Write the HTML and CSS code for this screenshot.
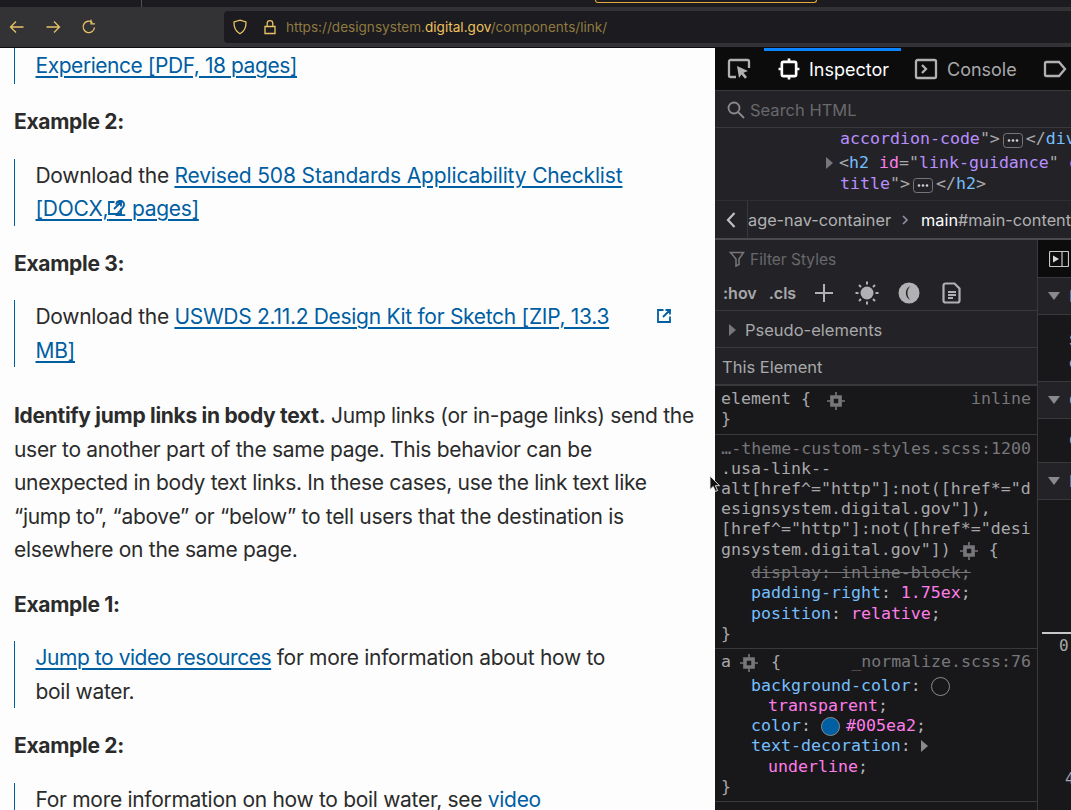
FILE: index.html
```html
<!DOCTYPE html>
<html lang="en">
<head>
    <meta charset="UTF-8">
    <title>Link | U.S. Web Design System</title>
    <link rel="stylesheet" href="styles.css">
</head>
<body>
    <div class="tabstrip">
        <div class="tabstrip-line"></div>
        <div class="active-tab"></div>
    </div>
    <div class="toolbar">
        <div class="nav-buttons">
            <svg class="nav-icon" viewBox="0 0 16 16"><path d="M14.500 8H1.500M7 2.500 1.500 8 7 13.500"/></svg>
            <svg class="nav-icon" viewBox="0 0 16 16"><path d="M1.500 8h13M9 2.500 14.500 8 9 13.500"/></svg>
            <svg class="nav-icon" viewBox="0 0 16 16"><path d="M13.500 8.500A5.700 5.700 0 1 1 11.500 3.500M10 .8v4h4"/></svg>
        </div>
        <div class="urlbar">
            <svg class="url-icon" viewBox="0 0 16 16"><path d="M8 1.200 14 3c.2 5.500-1.800 9.500-6 11.800C3.800 12.500 1.800 8.500 2 3z"/></svg>
            <svg class="url-icon lock" viewBox="0 0 16 16"><path d="M3 7.500h10v7H3zM5.200 7.500V4.500a2.800 2.800 0 0 1 5.600 0v3"/></svg>
            <span class="url-text">https://designsystem.<span class="url-domain">digital.gov</span>/components/link/</span>
        </div>
    </div>

    <div class="window">
        <div class="article">
            <div class="quote quote-first">
                <a class="tight" href="#">Experience [PDF, 18 pages]</a>
            </div>
            <p class="example">Example 2:</p>
            <div class="quote">
                Download the <a class="loose" href="#">Revised 508 Standards Applicability Checklist</a><br><a href="#">[DOCX,<span class="ext-anchor"><svg class="ext-icon ext-overlap" viewBox="0 0 16 16"><path d="M7.500 2H2v12h12V8.500M9.500 2H14v4.500M14 2 7 9"/></svg></span> 2 pages]</a>
            </div>
            <p class="example">Example 3:</p>
            <div class="quote">
                Download the <a href="#">USWDS 2.11.2 Design Kit for Sketch [ZIP, 13.3</a><span class="ext-anchor"><svg class="ext-icon ext-far" viewBox="0 0 16 16"><path d="M7.500 2H2v12h12V8.500M9.500 2H14v4.500M14 2 7 9"/></svg></span><br><a href="#">MB]</a>
            </div>
            <p class="body-text"><b>Identify jump links in body text.</b> Jump links (or in-page links) send the<br>
                user to another part of the same page. This behavior can be<br>
                unexpected in body text links. In these cases, use the link text like<br>
                “jump to”, “above” or “below” to tell users that the destination is<br>
                elsewhere on the same page.</p>
            <p class="example">Example 1:</p>
            <div class="quote">
                <a class="tight" href="#">Jump to video resources</a> for more information about how to<br>boil water.
            </div>
            <p class="example">Example 2:</p>
            <div class="quote">
                For more information on how to boil water, see <a class="plain" href="#">video</a>
            </div>
        </div>

        <div class="devtools">
            <div class="dt-tabs">
                <svg class="dt-icon picker" viewBox="0 0 24 24"><path d="M9 20H3.500A1.500 1.500 0 0 1 2 18.500V4.500A1.500 1.500 0 0 1 3.500 3h17A1.500 1.500 0 0 1 22 4.500V11"/><path class="solid" d="M10 9l11 5-4.500 1.800 3.500 4.200-2 1.700-3.500-4.300L12 21z"/></svg>
                <div class="dt-divider"></div>
                <div class="dt-tab dt-tab-active">
                    <svg class="dt-icon" viewBox="0 0 20 20"><path d="M5 3.500h10a1.500 1.500 0 0 1 1.500 1.500v10a1.500 1.500 0 0 1-1.500 1.500H5A1.500 1.500 0 0 1 3.500 15V5A1.500 1.500 0 0 1 5 3.500zM10 .5v3M10 16.500v3M.5 10h3M16.500 10h3"/></svg>
                    Inspector
                </div>
                <div class="dt-tab">
                    <svg class="dt-icon" viewBox="0 0 24 24"><path d="M3.500 3h17A1.500 1.500 0 0 1 22 4.500v15a1.500 1.500 0 0 1-1.500 1.500h-17A1.500 1.500 0 0 1 2 19.500v-15A1.500 1.500 0 0 1 3.500 3zM8 8l4 4-4 4"/></svg>
                    Console
                </div>
                <div class="dt-tab">
                    <svg class="dt-icon" viewBox="0 0 24 24"><path d="M3.500 5h12.500l6 7-6 7H3.500A1.500 1.500 0 0 1 2 17.500v-11A1.500 1.500 0 0 1 3.500 5z"/></svg>
                </div>
            </div>

            <div class="dt-search">
                <svg class="search-icon" viewBox="0 0 18 18"><circle cx="7" cy="7" r="5.500"/><path d="m11 11 6 6"/></svg>
                Search HTML
            </div>

            <div class="markup">
                <div class="ml1"><span class="attr">accordion-code</span>"&gt;<svg class="dots" viewBox="0 0 20 15"><rect x=".5" y=".5" width="19" height="14" rx="3"/><circle cx="6" cy="7.500" r="1.300"/><circle cx="10" cy="7.500" r="1.300"/><circle cx="14" cy="7.500" r="1.300"/></svg>&lt;/<span class="tag">div</span>&gt;</div>
                <div class="ml0"><span class="twisty"></span>&lt;<span class="tag">h2</span> <span class="name">id</span>="<span class="attr">link-guidance</span>" <span class="name">class</span></div>
                <div class="ml1"><span class="attr">title</span>"&gt;<svg class="dots" viewBox="0 0 20 15"><rect x=".5" y=".5" width="19" height="14" rx="3"/><circle cx="6" cy="7.500" r="1.300"/><circle cx="10" cy="7.500" r="1.300"/><circle cx="14" cy="7.500" r="1.300"/></svg>&lt;/<span class="tag">h2</span>&gt;</div>
            </div>

            <div class="crumbs">
                <div class="crumb-back"><svg viewBox="0 0 12 18"><path d="M9.500 2 3 9l6.500 7"/></svg></div>
                <span class="crumb">age-nav-container</span>
                <svg class="crumb-sep" viewBox="0 0 8 12"><path d="m2 2 4 4-4 4"/></svg>
                <span class="crumb"><span class="crumb-main">main</span>#main-content</span>
            </div>

            <div class="dt-bottom">
                <div class="rules">
                    <div class="filter">
                        <svg class="filter-icon" viewBox="0 0 16 16"><path d="M1.500 1.500h13L10 8v5.500L7 15V8z"/></svg>
                        Filter Styles
                    </div>
                    <div class="rule-tools">
                        <span>:hov</span>
                        <span class="cls">.cls</span>
                        <svg class="tool plus" viewBox="0 0 20 20"><path d="M10 1v18M1 10h18"/></svg>
                        <svg class="tool sun" viewBox="0 0 24 24"><circle class="solid" cx="12" cy="12" r="6.500"/><path d="M12 .5v3M12 20.500v3M.5 12h3M20.500 12h3M4 4l2 2M18 18l2 2M4 20l2-2M18 6l2-2"/></svg>
                        <svg class="tool moon" viewBox="0 0 22 22"><circle class="solid" cx="11" cy="11" r="10.500"/><path class="bite" d="M12.500 4A7.600 7.600 0 0 0 12.500 18 9.500 9.500 0 0 1 12.500 4z"/></svg>
                        <svg class="tool page" viewBox="0 0 20 22"><path d="M3.500 1.500h9l5 5v12a2 2 0 0 1-2 2h-12a2 2 0 0 1-2-2v-15a2 2 0 0 1 2-2zM6 10h8M6 13h8M6 16h5"/></svg>
                    </div>
                    <div class="pseudo"><span class="twisty"></span>Pseudo-elements</div>
                    <div class="this-element">This Element</div>

                    <div class="rule">
                        <div class="code-line"><span class="src">inline</span><span class="sel">element {</span><svg class="gear" viewBox="0 0 20 20"><path class="gear-box" d="M5.500 5.500h9v9h-9z"/><path d="M10 0v4M10 16v4M0 10h4M16 10h4"/></svg></div>
                        <div class="code-line sel">}</div>
                    </div>
                    <div class="rule">
                        <div class="code-line src-line">…-theme-custom-styles.scss:1200</div>
                        <div class="code-line sel">.usa-link--<br>alt[href^="http"]:not([href*="d<br>esignsystem.digital.gov"]),<br>[href^="http"]:not([href*="desi<br>gnsystem.digital.gov"])<svg class="gear gear-b" viewBox="0 0 20 20"><path class="gear-box" d="M5.500 5.500h9v9h-9z"/><path d="M10 0v4M10 16v4M0 10h4M16 10h4"/></svg>{</div>
                        <div class="code-line prop-line first-prop off"><s>display: inline-block;</s></div>
                        <div class="code-line prop-line"><span class="prop">padding-right</span>: <span class="val">1.75ex</span>;</div>
                        <div class="code-line prop-line"><span class="prop">position</span>: <span class="val">relative</span>;</div>
                        <div class="code-line sel">}</div>
                    </div>
                    <div class="rule">
                        <div class="code-line"><span class="src">_normalize.scss:76</span><span class="sel">a</span><svg class="gear gear-a" viewBox="0 0 20 20"><path class="gear-box" d="M5.500 5.500h9v9h-9z"/><path d="M10 0v4M10 16v4M0 10h4M16 10h4"/></svg><span class="sel">{</span></div>
                        <div class="code-line prop-line first-prop"><span class="prop">background-color</span>: <span class="swatch"></span></div>
                        <div class="code-line val-line"><span class="val">transparent</span>;</div>
                        <div class="code-line prop-line"><span class="prop">color</span>: <span class="swatch swatch-blue"></span><span class="val">#005ea2</span>;</div>
                        <div class="code-line prop-line"><span class="prop">text-decoration</span>: <span class="twisty twisty-val"></span></div>
                        <div class="code-line val-line"><span class="val">underline</span>;</div>
                        <div class="code-line sel">}</div>
                    </div>
                    <div class="rule rule-empty"></div>
                </div>

                <div class="side">
                    <div class="side-top"><svg viewBox="0 0 20 16"><rect x=".5" y=".5" width="19" height="15" rx="1"/><path d="M13 .5v15"/><path class="solid-white" d="M4 4.500v7l6-3.500z"/></svg></div>
                    <div class="side-head"><span class="down"></span>Flexbox</div>
                    <div class="side-body side-body-a">Select a Flex<br>container</div>
                    <div class="side-head"><span class="down"></span>Grid</div>
                    <div class="side-body side-body-b">CSS Grid</div>
                    <div class="side-head"><span class="down"></span>Box Model</div>
                    <div class="side-box">
                        <div class="box-line"></div>
                        <div class="box-num">0</div>
                        <div class="box-num box-num-b">4</div>
                    </div>
                </div>
            </div>
        </div>
    </div>

    <svg class="cursor" viewBox="0 0 12 18"><path d="M1 1v13.500l3.200-3 2.200 5 2.200-1-2.200-4.800H10.500z"/></svg>
</body>
</html>
```
FILE: styles.css
```css
* {
    box-sizing: border-box;
}

html, body {
    margin: 0;
    height: 100%;
    overflow: hidden;
}

body {
    font-family: Inter, "Liberation Sans", sans-serif;
    background-color: #0d0d0f;
    position: relative;
}

/* browser chrome */
.tabstrip {
    height: 7px;
    background-color: #1c1b1f;
    display: flex;
}

.tabstrip-line {
    width: 1px;
    height: 7px;
    margin-left: 141px;
    background-color: #55504a;
}

.active-tab {
    width: 222px;
    height: 3px;
    margin-left: 453px;
    border: 1px solid #e2a93b;
    border-top: none;
    border-radius: 0 0 5px 5px;
}

.toolbar {
    height: 40px;
    background-color: #333336;
    display: flex;
    align-items: center;
    padding-left: 9px;
}

.nav-buttons {
    display: flex;
    gap: 20px;
    width: 215px;
}

.nav-icon {
    width: 16px;
    height: 16px;
    fill: none;
    stroke: #e9c266;
    stroke-width: 1.300;
}

.urlbar {
    flex: 1;
    height: 32px;
    background-color: #1c1b1f;
    border-radius: 4px 0 0 4px;
    display: flex;
    align-items: center;
    padding-left: 8px;
    gap: 12px;
}

.url-icon {
    width: 16px;
    height: 16px;
    fill: none;
    stroke: #e9c266;
    stroke-width: 1.300;
}

.lock {
    margin-left: 2px;
}

.url-text {
    color: #8f7a42;
    font-size: 13.600px;
    margin-left: -4px;
    white-space: nowrap;
}

.url-domain {
    color: #efc25f;
}

/* page and devtools split */
.window {
    display: flex;
    height: 763px;
    margin-top: 1px;
}

.article {
    width: 715px;
    flex: none;
    background-color: #fdfdfd;
    color: #2b2b2b;
    font-size: 21px;
    line-height: 33.500px;
    padding-left: 14px;
    overflow: hidden;
    letter-spacing: -0.300px;
}

.article a {
    color: #005ea2;
    text-decoration: underline;
    text-decoration-thickness: 1.500px;
    text-underline-offset: 3px;
}

.article a.tight {
    letter-spacing: -0.450px;
}

.article a.loose {
    letter-spacing: -0.150px;
}

.quote {
    border-left: 1.500px solid #005ea2;
    padding-left: 20.500px;
    margin: 0;
    width: 670px;
}

.quote-first {
    height: 36px;
    padding-top: 1px;
}

.example {
    font-weight: 700;
    margin: 21px 0 20px;
}

.body-text {
    margin: 32px 0 20px;
}

.ext-anchor {
    position: relative;
    display: inline-block;
    width: 0;
    height: 0;
}

.ext-icon {
    position: absolute;
    width: 16px;
    height: 16px;
    fill: none;
    stroke: #005ea2;
    stroke-width: 1.800;
}

.ext-overlap {
    left: -1px;
    top: -16px;
}

.ext-far {
    left: 47px;
    top: -16px;
}

/* devtools */
.devtools {
    width: 356px;
    flex: none;
    background-color: #232327;
    display: flex;
    flex-direction: column;
    overflow: hidden;
    color: #b5b5b8;
}

.dt-tabs {
    height: 43px;
    background-color: #0c0c0d;
    border-bottom: 1px solid #38383d;
    display: flex;
    align-items: center;
    font-size: 18px;
    padding-left: 12px;
    flex: none;
}

.dt-icon {
    fill: none;
    stroke: #b1b1b3;
    stroke-width: 2.300;
    width: 24px;
    height: 24px;
    flex: none;
}

.solid {
    fill: #b1b1b3;
    stroke: none;
}

.solid-white {
    fill: #d8d8da;
    stroke: none;
}

.dt-divider {
    width: 1px;
    height: 30px;
    background-color: #4a4a4f;
    margin-left: 13px;
}

.dt-tab {
    display: flex;
    align-items: center;
    gap: 9px;
    height: 42px;
    padding: 0 13px;
    color: #a8a8ab;
}

.dt-tab-active {
    width: 137px;
    padding-left: 14px;
    color: #fff;
    border-top: 3px solid #0a84ff;
    padding-bottom: 3px;
}

.dt-tab-active .dt-icon {
    stroke: #fff;
    width: 22px;
    height: 22px;
    stroke-width: 2.400;
}

.dt-search {
    height: 37px;
    border-bottom: 1px solid #38383d;
    display: flex;
    align-items: center;
    gap: 5px;
    padding: 1px 0 0 12px;
    color: #68686d;
    font-size: 16.500px;
    flex: none;
}

.search-icon {
    width: 18px;
    height: 18px;
    fill: none;
    stroke: #8a8a8e;
    stroke-width: 1.800;
}

.markup {
    height: 72px;
    flex: none;
    overflow: hidden;
    font-family: "DejaVu Sans Mono", monospace;
    font-size: 16.600px;
    line-height: 21px;
    color: #a8a8ab;
    white-space: nowrap;
}

.ml0 {
    padding-left: 124px;
    margin-top: 3px;
}

.ml1 {
    padding-left: 125px;
}

.attr {
    color: #b98eff;
}

.tag {
    color: #75bfff;
}

.name {
    color: #ff7de9;
}

.dots {
    display: inline-block;
    width: 20px;
    height: 15px;
    margin: -4px 3px;
    vertical-align: 0;
}

.dots rect {
    fill: none;
    stroke: #77777b;
}

.dots circle {
    fill: #d0d0d3;
}

.twisty {
    display: inline-block;
    width: 0;
    height: 0;
    border-left: 7px solid #77777b;
    border-top: 6px solid transparent;
    border-bottom: 6px solid transparent;
    position: relative;
    left: -13px;
    margin-right: -7px;
    vertical-align: -1px;
}

.crumbs {
    height: 40px;
    flex: none;
    border-bottom: 2px solid #4a4a4f;
    border-top: 1px solid #2f2f33;
    display: flex;
    align-items: center;
    font-size: 16.300px;
    color: #b1b1b3;
    white-space: nowrap;
    overflow: hidden;
}

.crumb-back {
    width: 33px;
    height: 100%;
    border-right: 1px solid #38383d;
    display: flex;
    align-items: center;
    justify-content: center;
    flex: none;
}

.crumb-back svg {
    width: 12px;
    height: 18px;
    fill: none;
    stroke: #c0c0c3;
    stroke-width: 2.200;
}

.crumb-sep {
    width: 8px;
    height: 12px;
    margin: 0 12px 0 10px;
    fill: none;
    stroke: #8f8fa8;
    stroke-width: 1.700;
    flex: none;
}

.crumb-main {
    color: #fff;
}

.dt-bottom {
    flex: 1;
    display: flex;
    min-height: 0;
}

.rules {
    width: 323px;
    flex: none;
    border-right: 1px solid #38383d;
    overflow: hidden;
}

.filter {
    height: 36px;
    display: flex;
    align-items: center;
    gap: 5px;
    padding: 2px 0 0 14px;
    color: #68686d;
    font-size: 15.500px;
}

.filter-icon {
    width: 16px;
    height: 16px;
    fill: none;
    stroke: #77777b;
    stroke-width: 1.500;
}

.rule-tools {
    height: 35px;
    border-bottom: 1px solid #38383d;
    display: flex;
    align-items: center;
    padding-left: 8px;
    font-size: 16px;
    font-weight: 600;
    color: #a8a8ab;
}

.cls {
    margin-left: 12px;
}

.tool {
    width: 20px;
    height: 22px;
    fill: none;
    stroke: #b1b1b3;
    stroke-width: 2;
    flex: none;
}

.plus {
    margin-left: 18px;
}

.sun {
    margin-left: 21px;
    width: 24px;
    height: 24px;
}

.moon {
    margin-left: 19px;
    width: 22px;
    height: 22px;
}

.bite {
    fill: #232327;
    stroke: none;
}

.page {
    margin-left: 22px;
    stroke-width: 2.200;
}

.pseudo {
    height: 37px;
    border-bottom: 1px solid #38383d;
    display: flex;
    align-items: center;
    padding: 2px 0 0 30px;
    font-size: 16.500px;
    color: #a8a8ab;
}

.pseudo .twisty {
    left: -16px;
}

.this-element {
    height: 38px;
    border-bottom: 2px solid #38383d;
    display: flex;
    align-items: center;
    padding: 2px 0 0 7px;
    font-size: 16.500px;
    color: #a8a8ab;
}

.rule {
    background-color: #18181a;
    border-bottom: 1px solid #38383d;
    font-family: "DejaVu Sans Mono", monospace;
    font-size: 16.600px;
    padding: 3px 6px 4px 6px;
}

.rule-empty {
    height: 12px;
    border-bottom: none;
}

.code-line {
    line-height: 20.300px;
    white-space: nowrap;
}

.sel {
    color: #a8a8ab;
}

.src {
    float: right;
    color: #77777b;
}

.src-line {
    color: #77777b;
    text-align: right;
    line-height: 21px;
}

.prop-line {
    padding-left: 30px;
}

.first-prop {
    margin-top: 3px;
}

.val-line {
    padding-left: 47px;
}

.off {
    color: #77777b;
}

.prop {
    color: #75bfff;
}

.val {
    color: #ff7de9;
}

.gear {
    display: inline-block;
    width: 18px;
    height: 18px;
    margin: -4px 0 -4px 16px;
    vertical-align: -2px;
    fill: none;
    stroke: #77777b;
    stroke-width: 1.800;
}

.gear-box {
    stroke-width: 4;
}

.gear-b {
    margin: -4px 11px -4px 9px;
    vertical-align: -1px;
}

.gear-a {
    margin: -4px 13px -4px 9px;
    vertical-align: -1px;
}

.swatch {
    display: inline-block;
    width: 19px;
    height: 19px;
    margin: -4px 7px -4px 0;
    border-radius: 50%;
    border: 1px solid #8a8a8e;
    vertical-align: -1px;
}

.swatch-blue {
    background-color: #005ea2;
    margin-right: 6px;
}

.twisty-val {
    left: 0;
    margin-right: 0;
    border-left-color: #8a8a8e;
}

/* side panel, cut off by the window */
.side {
    flex: 1;
    background-color: #18181a;
    min-width: 0;
    overflow: hidden;
    font-size: 16.500px;
    color: #a8a8ab;
    white-space: nowrap;
}

.side-top {
    height: 37px;
    background-color: #0c0c0d;
    display: flex;
    align-items: center;
    padding-left: 11px;
}

.side-top svg {
    width: 20px;
    height: 16px;
    flex: none;
    fill: none;
    stroke: #c8c8cb;
    stroke-width: 1.200;
}

.side-head {
    height: 38px;
    background-color: #232327;
    border-top: 1px solid #38383d;
    border-bottom: 1px solid #38383d;
    display: flex;
    align-items: center;
    padding-left: 10px;
}

.down {
    width: 0;
    height: 0;
    flex: none;
    border-top: 8px solid #8a8a8e;
    border-left: 6.500px solid transparent;
    border-right: 6.500px solid transparent;
    margin-right: 9px;
}

.side-body {
    padding-left: 31px;
}

.side-body-a {
    height: 66px;
    line-height: 22px;
    padding-top: 14px;
}

.side-body-b {
    height: 43px;
    line-height: 43px;
}

.side-box {
    padding-top: 132px;
}

.box-line {
    height: 2px;
    margin-left: 4px;
    background-color: #c8c8cb;
}

.box-num {
    font-family: "DejaVu Sans Mono", monospace;
    font-size: 16px;
    padding-left: 21px;
    margin-top: 3px;
    line-height: 18px;
}

.box-num-b {
    margin-top: 115px;
    padding-left: 27px;
}

.cursor {
    position: absolute;
    left: 709px;
    top: 475px;
    width: 12px;
    height: 18px;
    fill: #111;
    stroke: #eee;
    stroke-width: 0.900;
}
```
